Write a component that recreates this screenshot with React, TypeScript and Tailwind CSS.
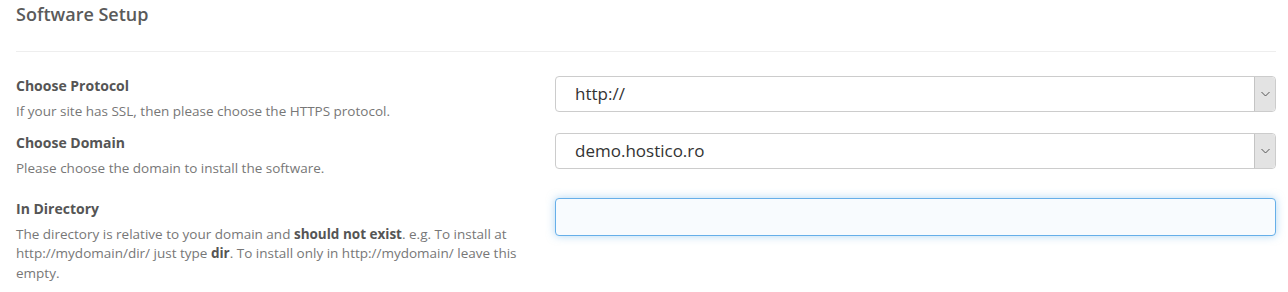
const SelectBox = ({ value }: { value: string }) => (
  <div className="relative flex h-[36px] items-center rounded-[4px] border border-[#cccccc] bg-white">
    <span className="pl-[19px] text-[17px] text-[#333]">{value}</span>
    <div className="absolute right-0 top-0 flex h-full w-[21px] items-center justify-center rounded-r-[4px] border-l border-[#c4c4c4] bg-[#e3e3e3]">
      <svg width="9" height="6" viewBox="0 0 9 6" fill="none">
        <path d="M0.5 1 L4.5 5 L8.5 1" stroke="#555" strokeWidth="1" />
      </svg>
    </div>
  </div>
);

export default function App() {
  return (
    <div className="bg-white pl-4 pr-[12px] font-['Open_Sans',sans-serif] text-[13.5px] leading-[19.5px] text-[#777]">
      <h2 className="pt-[1px] text-[18px] font-semibold leading-[27px] text-[#5a5a5a]">
        Software Setup
      </h2>
      <hr className="mt-[23px] border-t border-[#eeeeee]" />

      {/* Choose Protocol */}
      <div className="mt-[24px] flex">
        <div className="w-[525px] shrink-0">
          <div className="text-[14px] font-bold text-[#555]">Choose Protocol</div>
          <div className="mt-[6px]">
            If your site has SSL, then please choose the HTTPS protocol.
          </div>
        </div>
        <div className="ml-[14px] flex-1">
          <SelectBox value="http://" />
        </div>
      </div>

      {/* Choose Domain */}
      <div className="mt-[12px] flex">
        <div className="w-[525px] shrink-0">
          <div className="text-[14px] font-bold text-[#555]">Choose Domain</div>
          <div className="mt-[6px]">
            Please choose the domain to install the software.
          </div>
        </div>
        <div className="ml-[14px] flex-1">
          <SelectBox value="demo.hostico.ro" />
        </div>
      </div>

      {/* In Directory */}
      <div className="mt-[20px] flex">
        <div className="w-[525px] shrink-0 pt-[1px]">
          <div className="text-[14px] font-bold text-[#555]">In Directory</div>
          <div className="mt-[6px]">
            The directory is relative to your domain and{" "}
            <b className="text-[#555]">should not exist</b>. e.g. To install at
            http://mydomain/dir/ just type <b className="text-[#555]">dir</b>.
            To install only in http://mydomain/ leave this empty.
          </div>
        </div>
        <div className="ml-[14px] flex-1">
          <input
            type="text"
            className="h-[38px] w-full rounded-[4px] border border-[#66afe9] bg-[#f8fbfe] px-3 shadow-[0_0_8px_rgba(102,175,233,0.5)] outline-none"
          />
        </div>
      </div>
    </div>
  );
}
